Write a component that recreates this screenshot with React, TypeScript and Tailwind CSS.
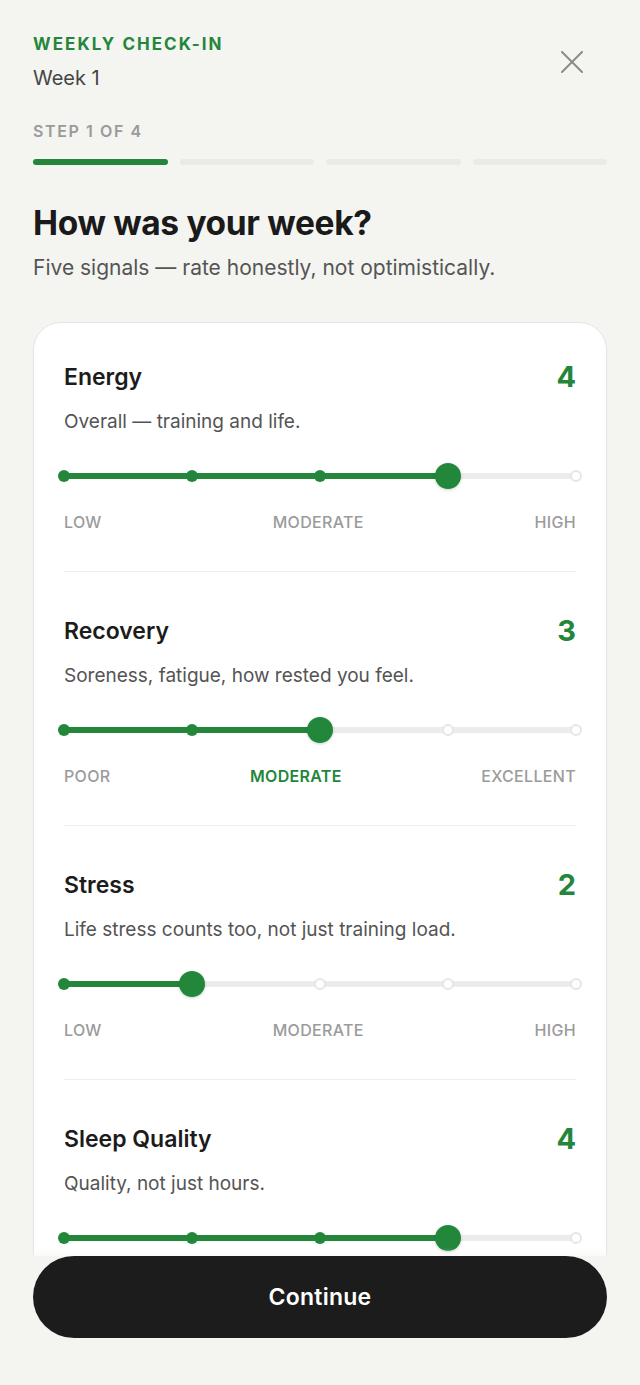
import React from "react";

type Signal = {
  title: string;
  desc: string;
  value: number;
  labels: [string, string, string];
};

const signals: Signal[] = [
  { title: "Energy", desc: "Overall — training and life.", value: 4, labels: ["Low", "Moderate", "High"] },
  { title: "Recovery", desc: "Soreness, fatigue, how rested you feel.", value: 3, labels: ["Poor", "Moderate", "Excellent"] },
  { title: "Stress", desc: "Life stress counts too, not just training load.", value: 2, labels: ["Low", "Moderate", "High"] },
  { title: "Sleep Quality", desc: "Quality, not just hours.", value: 4, labels: ["Poor", "Moderate", "Excellent"] },
];

const GREEN = "#23863a";

function Slider({ value }: { value: number }) {
  const idx = value - 1;
  return (
    <svg className="block h-7 w-full overflow-visible" height={28}>
      <defs>
        <filter id="thumbShadow" x="-50%" y="-50%" width="200%" height="200%">
          <feDropShadow dx="0" dy="1" stdDeviation="1.5" floodColor="#000" floodOpacity="0.18" />
        </filter>
      </defs>
      <line x1="0" y1="14" x2="100%" y2="14" stroke="#ececea" strokeWidth={6} strokeLinecap="round" />
      {idx > 0 && (
        <line x1="0" y1="14" x2={`${idx * 25}%`} y2="14" stroke={GREEN} strokeWidth={6} strokeLinecap="round" />
      )}
      {[0, 1, 2, 3, 4].map((i) =>
        i < idx ? (
          <circle key={i} cx={`${i * 25}%`} cy="14" r={6} fill={GREEN} />
        ) : i > idx ? (
          <circle key={i} cx={`${i * 25}%`} cy="14" r={5} fill="#ffffff" stroke="#e6e6e3" strokeWidth={2} />
        ) : null
      )}
      <circle cx={`${idx * 25}%`} cy="14" r={13} fill={GREEN} filter="url(#thumbShadow)" />
    </svg>
  );
}

function SignalRow({ s, first }: { s: Signal; first: boolean }) {
  const active = s.value === 1 ? 0 : s.value === 3 ? 1 : s.value === 5 ? 2 : -1;
  return (
    <div className={first ? "" : "mt-[43px]"}>
      <div className="flex h-8 items-center justify-between">
        <span className="text-[23px] font-semibold text-[#1c1c1c]">{s.title}</span>
        <span className="text-[29px] font-bold text-[#23863a]">{s.value}</span>
      </div>
      <p className="mt-4 text-[19px] leading-[26px] text-[#545454]">{s.desc}</p>
      <div className="mt-[27px]">
        <Slider value={s.value} />
      </div>
      <div className="mt-[22px] flex justify-between text-[16px] leading-5 uppercase tracking-[0.02em]">
        {s.labels.map((l, i) => (
          <span
            key={l}
            className={
              i === active ? "font-semibold text-[#23863a]" : "font-medium text-[#9b9b9b]"
            }
          >
            {l}
          </span>
        ))}
      </div>
      <div className="mt-[39px] h-px bg-[#efefec]" />
    </div>
  );
}

export default function App() {
  return (
    <div
      className="flex h-[1385px] flex-col overflow-hidden bg-[#f4f4f1]"
      style={{ fontFamily: "Inter, 'Noto Sans', sans-serif" }}
    >
      <div className="relative flex-1 overflow-hidden px-[33px] pt-8">
        <div className="flex items-start justify-between">
          <div>
            <div className="text-[17px] leading-6 font-bold tracking-[0.12em] text-[#23863a]">
              WEEKLY CHECK-IN
            </div>
            <div className="mt-2 text-[20px] leading-7 text-[#454545]">Week 1</div>
          </div>
          <button className="mt-[19px] mr-[24px] text-[#8a8a8a]" aria-label="Close">
            <svg width="22" height="22" viewBox="0 0 22 22" fill="none" stroke="currentColor" strokeWidth={2} strokeLinecap="round">
              <line x1="1" y1="1" x2="21" y2="21" />
              <line x1="21" y1="1" x2="1" y2="21" />
            </svg>
          </button>
        </div>

        <div className="mt-[29px] text-[16px] leading-5 font-semibold tracking-[0.1em] text-[#9a9a9a]">
          STEP 1 OF 4
        </div>
        <div className="mt-[18px] grid grid-cols-4 gap-3">
          <div className="h-[6px] rounded-full bg-[#23863a]" />
          <div className="h-[6px] rounded-full bg-[#eaeae8]" />
          <div className="h-[6px] rounded-full bg-[#eaeae8]" />
          <div className="h-[6px] rounded-full bg-[#eaeae8]" />
        </div>

        <h1 className="mt-[38px] text-[33.5px] leading-10 font-bold tracking-[-0.01em] text-[#1a1a1a]">
          How was your week?
        </h1>
        <p className="mt-[11px] text-[21px] leading-7 text-[#555555]">
          Five signals — rate honestly, not optimistically.
        </p>

        <div className="mt-10 rounded-[28px] border border-[#e6e6e2] bg-white px-[30px] pt-[38px] pb-10 shadow-[0_1px_3px_rgba(0,0,0,0.03)]">
          {signals.map((s, i) => (
            <SignalRow key={s.title} s={s} first={i === 0} />
          ))}
        </div>

        <div className="pointer-events-none absolute inset-x-0 bottom-0 h-2 bg-gradient-to-b from-[#f4f4f1]/0 to-[#f4f4f1]/50" />
      </div>

      <div className="px-[33px] pb-[47px]">
        <button className="flex h-[82px] w-full items-center justify-center rounded-full bg-[#1c1c1c] text-[23px] font-semibold tracking-[0.01em] text-white">
          Continue
        </button>
      </div>
    </div>
  );
}
